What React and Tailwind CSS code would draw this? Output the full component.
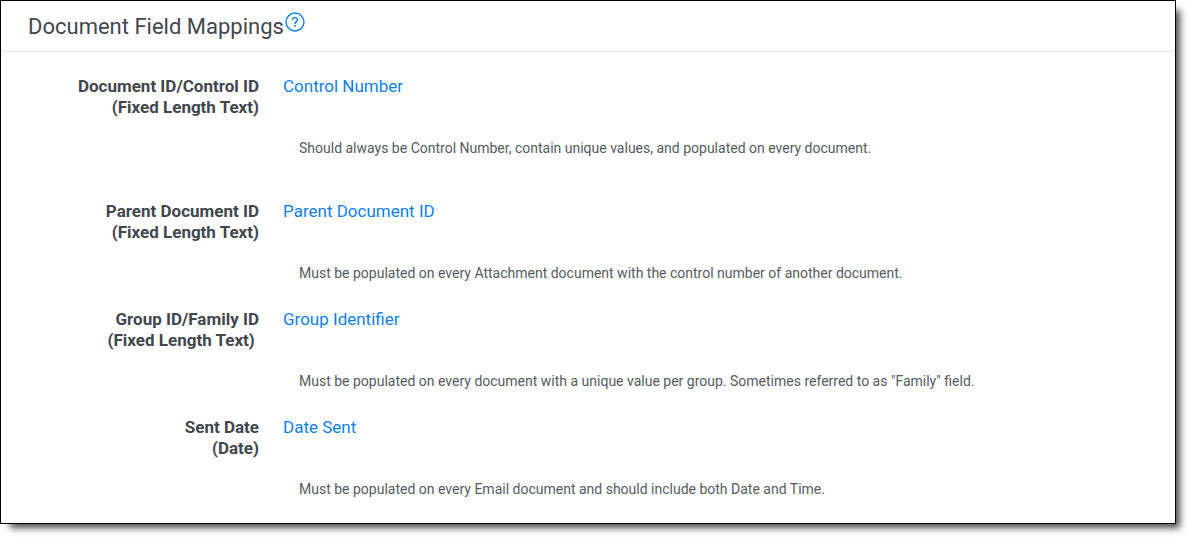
const fields = [
  { id: "control", label: "Document ID/Control ID", type: "(Fixed Length Text)", value: "Control Number", note: "Should always be Control Number, contain unique values, and populated on every document.", gap: "pb-[43px]" },
  { id: "parent", label: "Parent Document ID", type: "(Fixed Length Text)", value: "Parent Document ID", note: "Must be populated on every Attachment document with the control number of another document.", gap: "pb-[26px]" },
  { id: "group", label: "Group ID/Family ID", type: "(Fixed Length Text)\u00a0", value: "Group Identifier", note: "Must be populated on every document with a unique value per group. Sometimes referred to as \"Family\" field.", gap: "pb-[26px]" },
  { id: "sent", label: "Sent Date", type: "(Date)", value: "Date Sent", note: "Must be populated on every Email document and should include both Date and Time.", gap: "pb-6" },
];

function HelpIcon() {
  return (
    <svg className="size-5" viewBox="0 0 20 20" fill="none" stroke="#0f7fe8" aria-hidden="true">
      <circle cx="10" cy="10" r="9" strokeWidth="1.4" />
      <path d="M7.5 8C7.5 6.4 8.5 5.6 10 5.6S12.5 6.4 12.5 7.8C12.5 9.6 10 9.7 10 11.9" strokeWidth="1.4" />
      <path d="M10 13.1V14.8" strokeWidth="1.6" />
    </svg>
  );
}

export default function App() {
  return (
    <main className="bg-white pr-[15px] pb-[15px] font-[Roboto,sans-serif] text-[#41474d]">
      <section className="border border-black bg-white shadow-[7px_7px_7px_-3px_rgba(0,0,0,0.7)]">
        <header className="flex h-[51px] items-center border-b border-[#e4e8ed] px-[27px]">
          <h1 className="pt-px text-[22px] leading-7">Document Field Mappings</h1>
          <button type="button" aria-label="Help" className="ml-px mb-2">
            <HelpIcon />
          </button>
        </header>
        <dl className="pt-6">
          {fields.map((f) => (
            <div key={f.id} className={`grid grid-cols-[258px_1fr] gap-x-6 ${f.gap}`}>
              <dt className="text-right text-[17px] leading-[21px] font-bold">
                {f.label}
                <br />
                {f.type}
              </dt>
              <dd>
                <a href={`#${f.id}`} className="block w-fit text-[17px] leading-[21px] text-[#0f7fe8]">{f.value}</a>
                <p className="mt-[41px] pl-4 text-sm leading-5 text-[#555b61]">{f.note}</p>
              </dd>
            </div>
          ))}
        </dl>
      </section>
    </main>
  );
}
